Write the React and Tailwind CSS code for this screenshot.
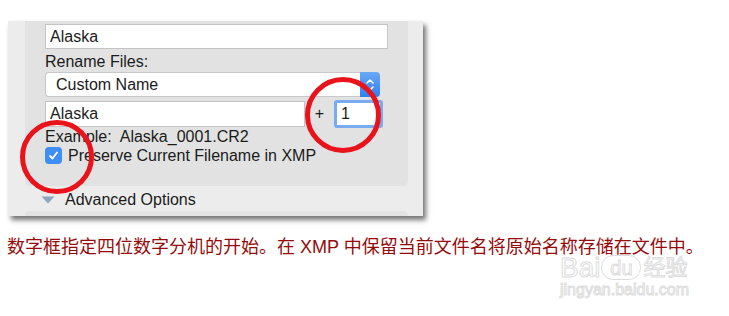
import React from 'react'

const ui = { fontFamily: '"Liberation Sans", Arial, sans-serif' }
const cjk = { fontFamily: '"Liberation Sans", "Noto Sans CJK SC", sans-serif' }

function Stepper() {
  return (
    <div className="w-[20px] h-full rounded-r-[4px] bg-gradient-to-b from-[#6aa8f7] to-[#2f7ff0] flex items-center justify-center">
      <svg width="10" height="16" viewBox="0 0 10 16" fill="none" stroke="white" strokeWidth="1.6" strokeLinecap="round" strokeLinejoin="round">
        <path d="M2 6 L5 3 L8 6" />
        <path d="M2 10 L5 13 L8 10" />
      </svg>
    </div>
  )
}

function Checkbox() {
  return (
    <div className="w-[17px] h-[17px] rounded-[4px] bg-[#3d8ef5] flex items-center justify-center shrink-0">
      <svg width="11" height="11" viewBox="0 0 11 11" fill="none" stroke="white" strokeWidth="1.8" strokeLinecap="round" strokeLinejoin="round">
        <path d="M2 6 L4.5 8.5 L9 2.5" />
      </svg>
    </div>
  )
}

function Dialog() {
  return (
    <div className="relative w-[415px] h-[195px] bg-[#ececec] shadow-[3px_4px_5px_rgba(0,0,0,0.55)] overflow-hidden" style={ui}>
      <div className="mx-[17px] mr-[15px] h-[165px] bg-[#e2e2e2] rounded-b-[5px] pt-[3px] px-[20px] text-[16px] text-[#1b1b1b] leading-none">
        <div className="h-[25px] bg-white border border-[#c4c4c4] flex items-center px-[4px]">Alaska</div>
        <div className="h-[23px] flex items-center pt-[2px]">Rename Files:</div>
        <div className="h-[25px] flex items-stretch mr-[8px]">
          <div className="flex-1 bg-white border border-[#c8c8c8] border-r-0 rounded-l-[4px] flex items-center pl-[10px]">Custom Name</div>
          <Stepper />
        </div>
        <div className="h-[28px] mt-[3px] flex items-center">
          <div className="w-[260px] h-[26px] bg-white border border-[#c4c4c4] flex items-center px-[4px]">Alaska</div>
          <div className="w-[29px] text-center">+</div>
          <div className="w-[49px] h-[28px] border-[3px] border-[#78abef] rounded-[3px] bg-white flex items-center px-[4px]">1</div>
        </div>
        <div className="h-[17px] flex items-center">Example:&nbsp; Alaska_0001.CR2</div>
        <div className="h-[21px] flex items-center gap-[6px]">
          <Checkbox />
          <span>Preserve Current Filename in XMP</span>
        </div>
      </div>
      <div className="h-[24px] flex items-center pl-[33px] pt-[3px] gap-[10px] text-[16px] text-[#1b1b1b] leading-none">
        <svg width="14" height="8" viewBox="0 0 14 8">
          <path d="M0.5 0.5 L13.5 0.5 L7 7.5 Z" fill="#8fa6c2" />
        </svg>
        <span>Advanced Options</span>
      </div>
      <div className="mx-[17px] mr-[15px] h-[10px] bg-[#e2e2e2] rounded-t-[5px] mt-[1px]"></div>

      <div className="absolute left-[297px] top-[56px] w-[76px] h-[76px] rounded-full border-[5px] border-[#e8131b]"></div>
      <div className="absolute left-[12px] top-[99px] w-[74px] h-[74px] rounded-full border-[5px] border-[#e8131b]"></div>
    </div>
  )
}

export default function App() {
  return (
    <div className="w-[729px] h-[316px] bg-white overflow-hidden">
      <div className="pt-[21px] pl-[8px]">
        <Dialog />
      </div>
      <div className="relative mt-[19px] pl-[7px]">
        <p className="text-[18px] leading-[24px] text-[#950a0a]" style={cjk}>
          数字框指定四位数字分机的开始。在 XMP 中保留当前文件名将原始名称存储在文件中。
        </p>
        <div className="absolute left-[560px] top-[19px] flex flex-col items-start text-white [-webkit-text-stroke:1px_#dddddd]" style={ui}>
          <div className="flex items-center h-[27px] text-[28px] leading-none">
            <span>Bai</span>
            <span className="ml-[1px] w-[40px] h-[25px] rounded-[12px] border border-[#dddddd] text-[20px] flex items-center justify-center">du</span>
            <span className="ml-[2px] text-[22px]" style={cjk}>经验</span>
          </div>
          <div className="mt-[1px] text-[16px] leading-none">jingyan.baidu.com</div>
        </div>
      </div>
    </div>
  )
}
